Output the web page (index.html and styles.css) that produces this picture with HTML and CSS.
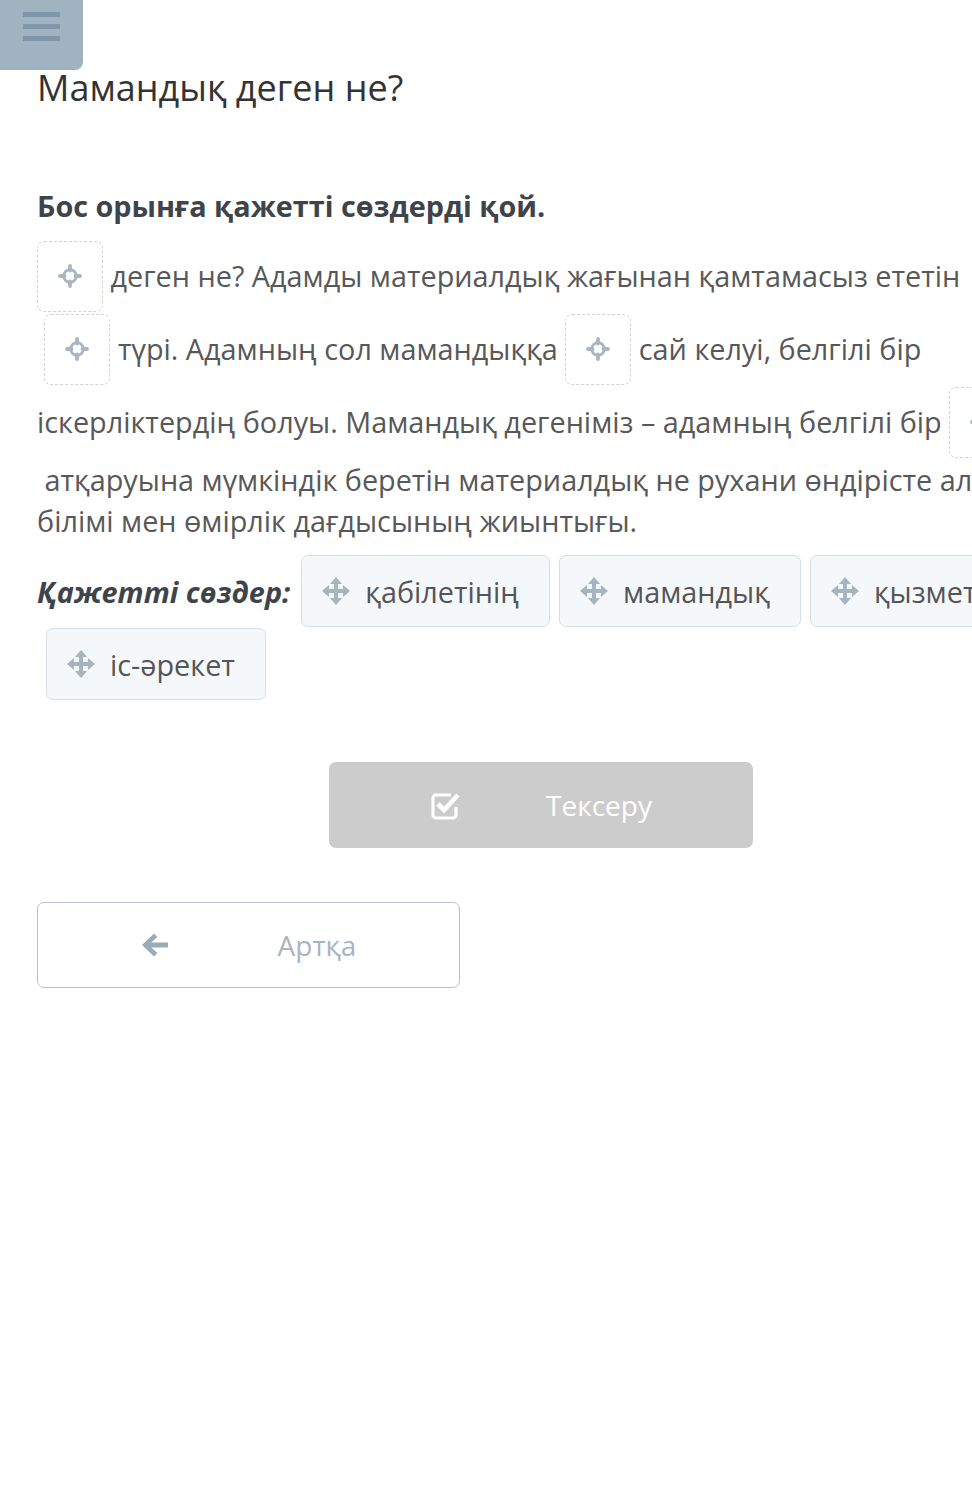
FILE: index.html
```html
<!DOCTYPE html>
<html lang="kk">
<head>
<meta charset="utf-8">
<title>Мамандық деген не?</title>
<link rel="stylesheet" href="styles.css">
</head>
<body>
<button class="menu-btn" aria-label="Мәзір">
  <span class="menu-line"></span><span class="menu-line"></span><span class="menu-line"></span>
</button>
<main class="page">
  <h1 class="title">Мамандық деген не?</h1>
  <h2 class="task">Бос орынға қажетті сөздерді қой.</h2>
  <p class="gap-text"><span class="drop"><svg class="drop-icon" viewBox="0 0 24 24"><circle cx="12" cy="12" r="6.3" fill="none" stroke="currentColor" stroke-width="2.8"/><path d="M12 2v4.5M12 17.5V22M2 12h4.5M17.5 12H22" stroke="currentColor" stroke-width="3.8" stroke-linecap="round"/></svg></span> деген не? Адамды материалдық жағынан қамтамасыз ететін<br>&nbsp;<span class="drop"><svg class="drop-icon" viewBox="0 0 24 24"><circle cx="12" cy="12" r="6.3" fill="none" stroke="currentColor" stroke-width="2.8"/><path d="M12 2v4.5M12 17.5V22M2 12h4.5M17.5 12H22" stroke="currentColor" stroke-width="3.8" stroke-linecap="round"/></svg></span> түрі. Адамның сол мамандыққа <span class="drop"><svg class="drop-icon" viewBox="0 0 24 24"><circle cx="12" cy="12" r="6.3" fill="none" stroke="currentColor" stroke-width="2.8"/><path d="M12 2v4.5M12 17.5V22M2 12h4.5M17.5 12H22" stroke="currentColor" stroke-width="3.8" stroke-linecap="round"/></svg></span> сай келуі, белгілі бір<br>іскерліктердің болуы. Мамандық дегеніміз – адамның белгілі бір <span class="drop"><svg class="drop-icon" viewBox="0 0 24 24"><circle cx="12" cy="12" r="6.3" fill="none" stroke="currentColor" stroke-width="2.8"/><path d="M12 2v4.5M12 17.5V22M2 12h4.5M17.5 12H22" stroke="currentColor" stroke-width="3.8" stroke-linecap="round"/></svg></span><br>&nbsp;атқаруына мүмкіндік беретін материалдық не рухани өндірісте алған<br>білімі мен өмірлік дағдысының жиынтығы.</p>

  <div class="bank">
    <span class="bank-label">Қажетті сөздер:</span>
    <span class="chip"><svg class="move-icon" viewBox="0 0 28 28"><path d="M14 0l6 7h-4v5h5V8l7 6-7 6v-4h-5v5h4l-6 7-6-7h4v-5H7v4l-7-6 7-6v4h5V7H8z" fill="currentColor"/></svg>қабілетінің</span>
    <span class="chip"><svg class="move-icon" viewBox="0 0 28 28"><path d="M14 0l6 7h-4v5h5V8l7 6-7 6v-4h-5v5h4l-6 7-6-7h4v-5H7v4l-7-6 7-6v4h5V7H8z" fill="currentColor"/></svg>мамандық</span>
    <span class="chip"><svg class="move-icon" viewBox="0 0 28 28"><path d="M14 0l6 7h-4v5h5V8l7 6-7 6v-4h-5v5h4l-6 7-6-7h4v-5H7v4l-7-6 7-6v4h5V7H8z" fill="currentColor"/></svg>қызмет</span>
    <span class="chip"><svg class="move-icon" viewBox="0 0 28 28"><path d="M14 0l6 7h-4v5h5V8l7 6-7 6v-4h-5v5h4l-6 7-6-7h4v-5H7v4l-7-6 7-6v4h5V7H8z" fill="currentColor"/></svg>іс-әрекет</span>
  </div>

  <div class="check-row">
    <button class="btn-check" disabled>
      <svg class="check-icon" viewBox="0 0 30 30"><path d="M21 5H6a3 3 0 0 0-3 3v17a3 3 0 0 0 3 3h17a3 3 0 0 0 3-3v-8" fill="none" stroke="currentColor" stroke-width="3.2"/><path d="M8 14l6 6L28 5" fill="none" stroke="currentColor" stroke-width="4.6" stroke-linejoin="miter"/></svg>
      <span>Тексеру</span>
    </button>
  </div>

  <button class="btn-back">
    <svg class="back-icon" viewBox="0 0 28 28"><path d="M1 14L13 2.5l3.4 3.4-6.2 5.7H27v4.8H10.2l6.2 5.7-3.4 3.4z" fill="currentColor"/></svg>
    <span>Артқа</span>
  </button>
</main>
</body>
</html>
```

FILE: styles.css
```css
html, body {
  margin: 0;
  padding: 0;
  background: #ffffff;
  overflow: hidden;
}

body {
  font-family: "Open Sans", "Noto Sans", sans-serif;
  color: #555555;
  width: 972px;
  min-height: 1512px;
  position: relative;
}

.menu-btn {
  position: absolute;
  left: 0;
  top: 0;
  width: 83px;
  height: 70px;
  border: 0;
  padding: 12px 0 0 23px;
  margin: 0;
  background: #9fb3c1;
  border-radius: 0 0 8px 0;
  display: flex;
  flex-direction: column;
  align-items: flex-start;
  gap: 7px;
  box-sizing: border-box;
}

.menu-line {
  display: block;
  width: 37px;
  height: 5px;
  background: #7f97a8;
}

.page {
  width: 1008px;
  padding: 0 0 0 37px;
}

.title {
  margin: 66px 0 0;
  font-size: 36px;
  line-height: 43px;
  font-weight: 400;
  color: #333333;
}

.task {
  margin: 76px 0 0;
  font-size: 28.8px;
  line-height: 41px;
  font-weight: 700;
  color: #3e4449;
}

.gap-text {
  margin: 14px 0 0;
  font-size: 28.8px;
  line-height: 41px;
  white-space: nowrap;
  color: #585858;
}

.drop {
  display: inline-block;
  width: 66px;
  height: 71px;
  margin: 1px 0;
  box-sizing: border-box;
  border: 1.5px dashed #cfd3d7;
  border-radius: 7px;
  vertical-align: -26px;
  color: #a9b6c1;
}

.drop-icon {
  display: block;
  width: 24px;
  height: 24px;
  margin: 22px auto 0;
}

.bank {
  display: flex;
  flex-wrap: wrap;
  align-items: center;
  row-gap: 1px;
  margin-top: 14px;
}

.bank-label {
  font-size: 28.8px;
  font-weight: 700;
  font-style: italic;
  color: #3e4449;
  margin-right: 2px;
}

.chip {
  display: inline-flex;
  align-items: center;
  height: 72px;
  box-sizing: border-box;
  margin-left: 9px;
  padding: 0 30px 0 20px;
  gap: 15px;
  background: #f5f8fb;
  border: 1px solid #d6dee6;
  border-radius: 7px;
  font-size: 28.8px;
  color: #555555;
}

.move-icon {
  width: 28px;
  height: 28px;
  color: #a7b4c0;
  flex: none;
}

.check-row {
  display: flex;
  justify-content: center;
  margin-top: 62px;
}

.btn-check {
  width: 424px;
  height: 86px;
  border: 0;
  border-radius: 7px;
  background: #cccccc;
  color: #ffffff;
  display: flex;
  align-items: center;
  justify-content: center;
  gap: 86px;
  font-family: inherit;
  font-size: 28px;
  padding: 0;
}

.check-icon {
  width: 30px;
  height: 30px;
}

.btn-back {
  margin-top: 54px;
  width: 423px;
  height: 86px;
  background: #ffffff;
  border: 1.5px solid #b9c2ca;
  border-radius: 7px;
  display: flex;
  align-items: center;
  justify-content: center;
  gap: 109px;
  font-family: inherit;
  font-size: 28px;
  color: #a9b4bf;
  padding: 0;
}

.back-icon {
  width: 28px;
  height: 28px;
  color: #9aabb8;
}
```
